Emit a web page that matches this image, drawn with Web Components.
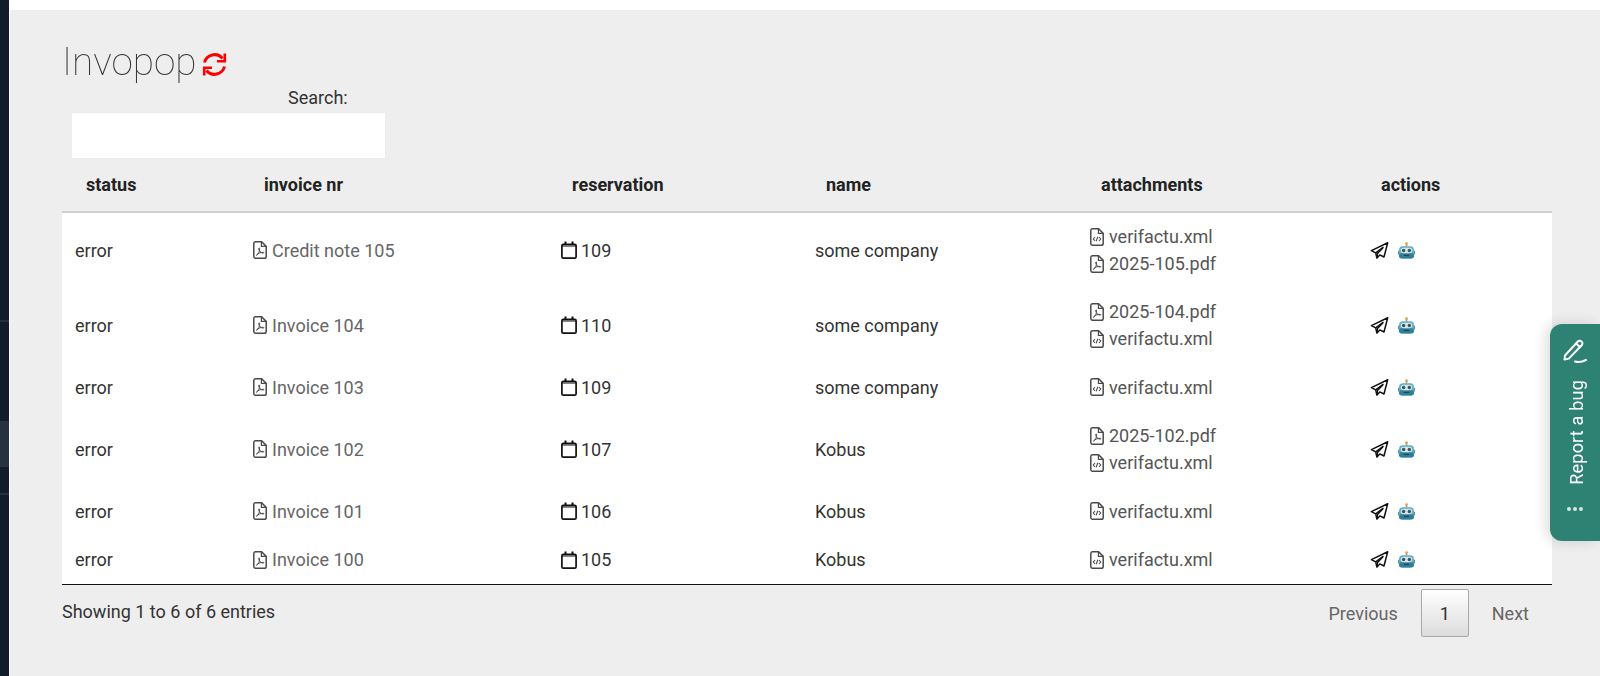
<!DOCTYPE html>
<html>
<head>
<meta charset="utf-8">
<title>Invopop</title>
<style>
  html, body { margin: 0; height: 100%; overflow: hidden; }
  body { font-family: Roboto, "Liberation Sans", sans-serif; font-size: 18px; color: #333; background: #eee; }
</style>
</head>
<body>
<app-shell>
  <page-title>Invopop</page-title>
  <search-box></search-box>
  <invoice-table>
    <invoice-row number="Credit note 105" reservation="109" name="some company" files="verifactu.xml,2025-105.pdf" tall></invoice-row>
    <invoice-row number="Invoice 104" reservation="110" name="some company" files="2025-104.pdf,verifactu.xml" tall></invoice-row>
    <invoice-row number="Invoice 103" reservation="109" name="some company" files="verifactu.xml"></invoice-row>
    <invoice-row number="Invoice 102" reservation="107" name="Kobus" files="2025-102.pdf,verifactu.xml" tall></invoice-row>
    <invoice-row number="Invoice 101" reservation="106" name="Kobus" files="verifactu.xml"></invoice-row>
    <invoice-row number="Invoice 100" reservation="105" name="Kobus" files="verifactu.xml"></invoice-row>
  </invoice-table>
  <table-footer>Showing 1 to 6 of 6 entries</table-footer>
</app-shell>
<bug-tab></bug-tab>

<script>
const icons = {
  pdf: `<svg width="14" height="18" viewBox="0 0 14 18" fill="none" stroke="#4a4a4a" stroke-width="1.5"><path d="M2.400.800h6.200l4.600 4.600v10a1.800 1.800 0 0 1-1.800 1.800H2.400A1.800 1.800 0 0 1 .800 15.400V2.600A1.800 1.800 0 0 1 2.400.800Z"/><path d="M8.400 1v4.400h4.600" stroke-width="1.200"/><path d="M3.400 14.200c2-1 3.400-4 3.200-6.700-.1-1-1-.9-.9.100.3 2.500 2 4.400 4.500 4.500.9 0 .9-.8 0-.8-2.200-.1-5.200.9-6.800 2.900Z" stroke-width="1"/></svg>`,
  xml: `<svg width="14" height="18" viewBox="0 0 14 18" fill="none" stroke="#4a4a4a" stroke-width="1.500"><path d="M2.400.800h6.200l4.600 4.600v10a1.800 1.800 0 0 1-1.800 1.800H2.400A1.800 1.800 0 0 1 .800 15.400V2.600A1.800 1.800 0 0 1 2.400.800Z"/><path d="M8.400 1v4.400h4.600" stroke-width="1.200"/><path d="M5 9 3.300 11 5 13M9 9l1.700 2L9 13M7.800 8.700 6.200 13.300" stroke-width="1.100"/></svg>`,
  calendar: `<svg width="16" height="18" viewBox="0 0 16 18" fill="none" stroke="#111" stroke-width="1.700"><rect x=".9" y="3.300" width="14.200" height="13.800" rx="1.400"/><path d="M.9 5h14.200" stroke-width="1"/><path d="M4.500.5v3.200M11.500.5v3.200" stroke-width="2"/></svg>`,
  send: `<svg width="19" height="17" viewBox="0 0 18 17" fill="none" stroke="#111" stroke-width="1.500" stroke-linejoin="round"><path d="M17.200.8.900 8.600l4.300 2.200 1.200 5.300 2.900-3.200 4.200 2.100Z"/><path d="M5.200 10.800 13 5"/><path d="M6.400 16.100 7 11.400 12.500 5.800"/></svg>`,
  robot: `<svg width="17" height="17" viewBox="0 0 16 16"><circle cx="8" cy="1.600" r="1.400" fill="#f0a23a"/><rect x="7.300" y="2.500" width="1.400" height="2" fill="#8a98a0"/><rect x=".1" y="8" width="2" height="4" rx="1" fill="#4a7f90"/><rect x="13.900" y="8" width="2" height="4" rx="1" fill="#4a7f90"/><rect x="1" y="4" width="14" height="11.500" rx="3.500" fill="#5fb0c4"/><rect x="1" y="10.500" width="14" height="5" rx="2.200" fill="#2f7f97"/><rect x="2.600" y="5.300" width="10.800" height="5.400" rx="2.600" fill="#d6e4e8"/><circle cx="5.300" cy="8" r="1.600" fill="#40525c"/><circle cx="10.700" cy="8" r="1.600" fill="#40525c"/><rect x="5.500" y="12" width="5" height="1.200" fill="#16485a"/></svg>`
};

class AppShell extends HTMLElement {
  constructor() {
    super();
    this.attachShadow({ mode: "open" }).innerHTML = `
    <style>
      :host { display: flex; width: 1600px; height: 676px; overflow: hidden; }
      .rail { flex: none; width: 9px; background: #131c2b; border-right: 1px solid #fff; display: flex; flex-direction: column; }
      .rail i { display: block; flex: none; }
      .rail .gap1 { height: 320px; }
      .rail .line { height: 2px; background: #27303e; }
      .rail .gap2 { height: 99px; }
      .rail .active { height: 46px; background: #263242; }
      .rail .gap3 { height: 26px; }
      .main { flex: 1; min-width: 0; display: flex; flex-direction: column; }
      .topbar { flex: none; height: 10px; background: #fff; }
      .content { flex: 1; padding: 28px 48px 0 52px; }
    </style>
    <div class="rail"><i class="gap1"></i><i class="line"></i><i class="gap2"></i><i class="active"></i><i class="gap3"></i><i class="line"></i></div>
    <div class="main">
      <div class="topbar"></div>
      <div class="content"><slot></slot></div>
    </div>`;
  }
}

class PageTitle extends HTMLElement {
  constructor() {
    super();
    this.attachShadow({ mode: "open" }).innerHTML = `
    <style>
      :host { display: flex; align-items: center; gap: 6px; height: 47px; font-size: 38.7px; font-weight: 100; color: #333; line-height: 47px; will-change: opacity; }
      svg { margin-top: 6px; }
    </style>
    <slot></slot>
    <svg width="25" height="25" viewBox="0 0 25 25" fill="none" stroke="#f00" stroke-width="3">
      <path d="M2.500 10.500A10.300 10.300 0 0 1 20.500 6.500"/>
      <path d="M22.800 1.500v7.800h-7.800" stroke-width="2.600"/>
      <path d="M22.500 14.500A10.300 10.300 0 0 1 4.500 18.500"/>
      <path d="M2.200 23.500v-7.800h7.800" stroke-width="2.600"/>
    </svg>`;
  }
}

class SearchBox extends HTMLElement {
  constructor() {
    super();
    this.attachShadow({ mode: "open" }).innerHTML = `
    <style>
      :host { display: block; padding: 3px 0 0 10px; }
      label { display: block; padding-left: 216px; height: 25px; line-height: 20px; color: #333; }
      input { display: block; box-sizing: border-box; width: 313px; height: 45px; border: 1px solid #fff; box-shadow: 0 0 1px #e6e6e6; background: #fff; outline: none; padding: 0; }
    </style>
    <label for="q">Search:</label>
    <input id="q" type="search">`;
  }
}

class InvoiceTable extends HTMLElement {
  constructor() {
    super();
    this.attachShadow({ mode: "open" }).innerHTML = `
    <style>
      :host { display: block; --cols: 178px 308px 254px 275px 280px 1fr; }
      .head { display: grid; grid-template-columns: var(--cols); height: 55px; align-items: center; border-bottom: 2px solid #cfcfcf; box-sizing: border-box; font-weight: 700; color: #222; font-size: 18px; }
      .head span { padding-left: 24px; }
      .body { background: #fff; border-bottom: 1px solid #111; }
    </style>
    <div class="head"><span>status</span><span>invoice nr</span><span>reservation</span><span>name</span><span>attachments</span><span>actions</span></div>
    <div class="body"><slot></slot></div>`;
  }
}

class InvoiceRow extends HTMLElement {
  connectedCallback() {
    const files = this.getAttribute("files").split(",").map(f =>
      `<a>${f.endsWith(".pdf") ? icons.pdf : icons.xml}<span>${f}</span></a>`).join("");
    this.attachShadow({ mode: "open" }).innerHTML = `
    <style>
      :host { display: grid; grid-template-columns: var(--cols); align-items: center; height: ${this.hasAttribute("tall") ? 75 : 49}px; color: #333; }
      :host(:last-child) { height: 48px; }
      div { padding-left: 13px; display: flex; align-items: center; margin-top: -1px; }
      .link { color: #666; gap: 5px; }
      .cal { gap: 4px; color: #333; }
      .files { flex-direction: column; align-items: flex-start; }
      a { display: flex; align-items: center; gap: 5px; height: 27px; color: #555; }
      .act { gap: 9px; }
      svg { flex: none; }
    </style>
    <div>error</div>
    <div class="link">${icons.pdf}<span>${this.getAttribute("number")}</span></div>
    <div class="cal">${icons.calendar}<span>${this.getAttribute("reservation")}</span></div>
    <div>${this.getAttribute("name")}</div>
    <div class="files">${files}</div>
    <div class="act">${icons.send}${icons.robot}</div>`;
  }
}

class TableFooter extends HTMLElement {
  constructor() {
    super();
    this.attachShadow({ mode: "open" }).innerHTML = `
    <style>
      :host { display: flex; justify-content: space-between; align-items: flex-start; color: #333; }
      .info { padding-top: 16px; }
      .pager { display: flex; align-items: center; padding-top: 4px; color: #666; margin-right: 23px; }
      .cur { box-sizing: border-box; width: 48px; height: 48px; margin: 0 23px; display: flex; align-items: center; justify-content: center; color: #333;
        border: 1px solid #a9a9a9; border-radius: 2px; background: linear-gradient(#fff, #dcdcdc); }
    </style>
    <div class="info"><slot></slot></div>
    <div class="pager"><span>Previous</span><span class="cur">1</span><span>Next</span></div>`;
  }
}

class BugTab extends HTMLElement {
  constructor() {
    super();
    this.attachShadow({ mode: "open" }).innerHTML = `
    <style>
      :host { position: fixed; right: 0; top: 324px; width: 50px; height: 217px; box-sizing: border-box; padding: 14px 0 0 0; background: #2d8273; border-radius: 12px 0 0 12px; color: #fff;
        display: flex; flex-direction: column; align-items: center; box-shadow: -4px 0 14px rgba(0,0,0,.14); font-family: Roboto, sans-serif; font-size: 18px; }
      .txt { writing-mode: vertical-rl; transform: rotate(180deg); margin: 16px 0 0 4px; line-height: 20px; letter-spacing: .2px; }
      .dots { display: flex; gap: 2px; margin-top: 22px; }
      .dots b { width: 4px; height: 4px; border-radius: 50%; background: #d5e6e2; }
    </style>
    <svg width="26" height="26" viewBox="0 0 26 26" fill="none" stroke="#fff" stroke-width="2" stroke-linejoin="round">
      <path d="M3 17.500 15.800 3.500a2.600 2.600 0 0 1 3.800 0 2.600 2.600 0 0 1 .1 3.700L6.800 20.600l-4.300 1Z"/>
      <path d="M14 5.500 18.500 9.500"/>
      <path d="M13 23.500c3 .8 7 .6 11-1.500" stroke-linecap="round"/>
    </svg>
    <span class="txt">Report a bug</span>
    <span class="dots"><b></b><b></b><b></b></span>`;
  }
}

customElements.define("app-shell", AppShell);
customElements.define("page-title", PageTitle);
customElements.define("search-box", SearchBox);
customElements.define("invoice-table", InvoiceTable);
customElements.define("invoice-row", InvoiceRow);
customElements.define("table-footer", TableFooter);
customElements.define("bug-tab", BugTab);
</script>
</body>
</html>
